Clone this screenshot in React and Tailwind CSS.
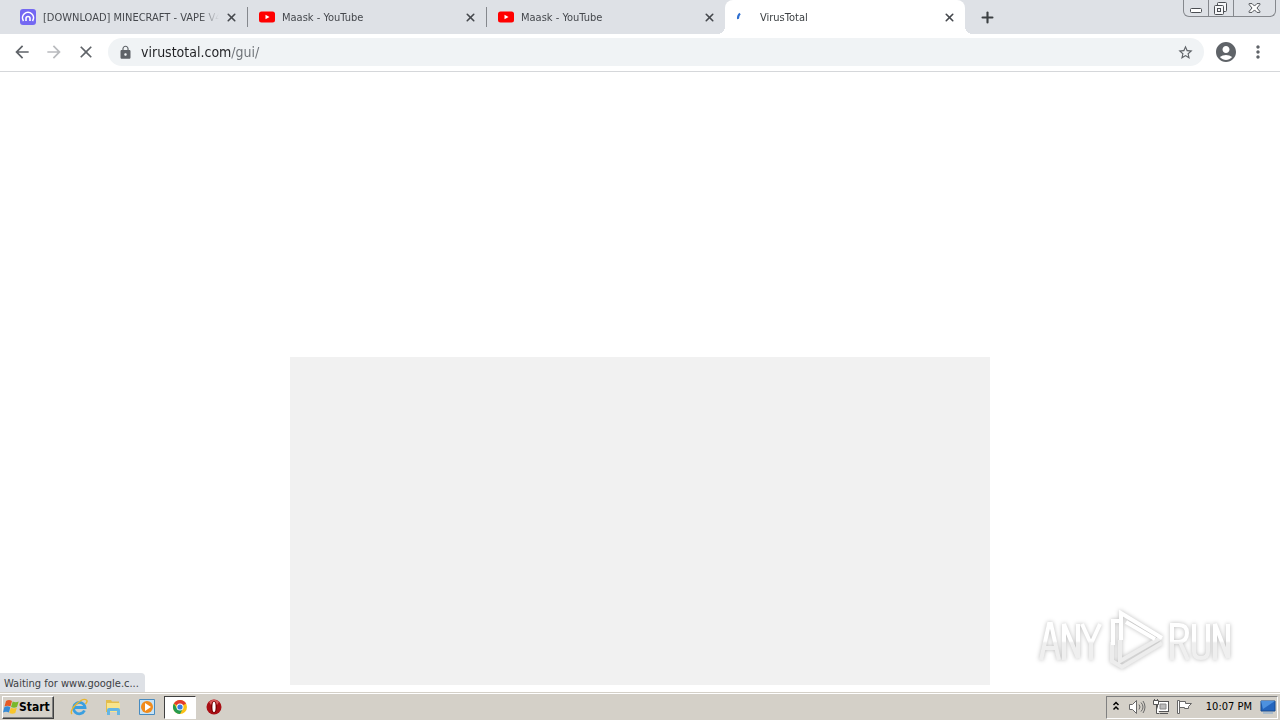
import { X, Plus } from "lucide-react";
import { MdArrowBack, MdArrowForward, MdClose, MdLock, MdStarBorder, MdAccountCircle, MdMoreVert } from "react-icons/md";

function YouTubeIcon() {
  return (
    <svg viewBox="0 0 16 16" className="size-4 shrink-0">
      <rect y="2.500" width="16" height="11" rx="2.500" fill="#f00" />
      <path d="M6.500 5.700v4.600L10.500 8z" fill="#fff" />
    </svg>
  );
}

function ForumIcon() {
  return (
    <svg viewBox="0 0 16 16" className="size-4 shrink-0">
      <rect width="16" height="16" rx="3" fill="#7468f2" />
      <path d="M3.500 12A5.500 5.500 0 1 1 12.500 12M6 12V9.500a2 2 0 0 1 4 0V12" fill="none" stroke="#fff" strokeWidth="1.6" />
    </svg>
  );
}

function Spinner() {
  return (
    <svg viewBox="0 0 16 16" className="mr-1 size-4 shrink-0">
      <path d="M5 10Q4.500 7 7 4.500" fill="none" stroke="#2f6fd0" strokeWidth="2" />
    </svg>
  );
}

const tabs = [
  { title: "[DOWNLOAD] MINECRAFT - VAPE V4", Icon: ForumIcon },
  { title: "Maask - YouTube", Icon: YouTubeIcon },
  { title: "Maask - YouTube", Icon: YouTubeIcon },
  { title: "VirusTotal", Icon: Spinner, active: true },
];

function Tab({ title, Icon, active, divider }) {
  return (
    <div
      className={
        "relative flex h-full min-w-0 items-center pr-2 " +
        (active ? "w-[240px] rounded-t-lg bg-white pl-2 text-[#3c4043]" : "w-[239px] pl-3 text-[#45484d]")
      }
    >
      {active && (
        <>
          <span className="absolute bottom-0 -left-2 size-2 bg-[radial-gradient(circle_at_0_0,#dee1e6_8px,white_8px)]" />
          <span className="absolute -right-2 bottom-0 size-2 bg-[radial-gradient(circle_at_100%_0,#dee1e6_8px,white_8px)]" />
        </>
      )}
      {divider && <span className="absolute -right-px h-5 w-px bg-[#85888d]" />}
      <button className="flex min-w-0 flex-1 items-center gap-[7px] text-left">
        <Icon />
        <span className="flex-1 overflow-hidden pt-px whitespace-nowrap [mask-image:linear-gradient(to_right,black_calc(100%-24px),transparent_calc(100%-4px))]">{title}</span>
      </button>
      <button aria-label="Close tab" className="flex size-4 shrink-0 items-center justify-center">
        <X size={13} strokeWidth={3} color="#45484d" />
      </button>
    </div>
  );
}

function WindowButtons() {
  return (
    <div className="flex h-[17px] self-start rounded-b-md border border-t-0 border-[#85888d]">
      <button aria-label="Minimize" className="w-[25px] border-r border-[#85888d]">
        <svg viewBox="0 0 24 16" className="h-4 w-6" fill="#fff" stroke="#4b4e53">
          <rect x="6.500" y="8.500" width="11" height="4" rx="1" />
        </svg>
      </button>
      <button aria-label="Restore" className="w-[25px] border-r border-[#85888d]">
        <svg viewBox="0 0 24 16" className="h-4 w-6" fill="#f6f7f9" stroke="#4b4e53">
          <rect x="8.500" y="2.500" width="9" height="9" rx="1" />
          <rect x="5.500" y="5.500" width="9" height="9" rx="1" />
          <rect x="8.500" y="8.500" width="3" height="3" />
        </svg>
      </button>
      <button aria-label="Close" className="w-[41px]">
        <svg viewBox="0 0 42 16" className="h-4 w-[41px]" fill="#fff" stroke="#4b4e53">
          <path d="M15.500 3.500h3l2.500 2.500 2.500-2.500h3v1L23.500 8l3 3.500v1h-3L21 10l-2.500 2.500h-3v-1l3-3.500-3-3.500z" />
        </svg>
      </button>
    </div>
  );
}

function Watermark() {
  return (
    <svg viewBox="0 0 200 70" className="absolute right-[43px] bottom-[18px] h-[70px] w-[200px] drop-shadow-[0_0_2px_#bbb]" role="img" aria-label="ANY RUN">
      <defs>
        <linearGradient id="letters" gradientUnits="userSpaceOnUse" x1="0" y1="18" x2="0" y2="56">
          <stop offset="0.5" stopColor="#fff" />
          <stop offset="0.55" stopColor="#efefef" />
        </linearGradient>
      </defs>
      <g fill="none" stroke="url(#letters)" strokeWidth="4">
        <path d="M4 56 12 20h2l8 36M7 44h12M27 56V20l14 34V20M45 20l9 20 9-20M54 39v17" />
        <path d="M135 56V21h7q8 0 8 8t-8 9h-7M143 38l8 18M157 20v27q0 7 7 7t7-7V20M178 56V20l13 34V20" />
      </g>
      <g fill="none" strokeWidth="4">
        <path d="M75 38v19l10 6 40-24M83 36v21l42-24" stroke="#ededed" />
        <path d="M83 17h-7v24M84 36V9l41 25M89 18l29 17" stroke="#fff" />
      </g>
    </svg>
  );
}

function WindowsFlag() {
  return (
    <svg viewBox="0 0 16 16" className="size-4">
      <path d="M3 2q3-2 6 0L7.500 7.500q-3-1.500-6 0z" fill="#e65a25" />
      <path d="M9.700 2.500q3 1.500 6 0L14 8q-3 1.500-6 0z" fill="#79b82b" />
      <path d="M1.300 8.200q3-1.700 6 0L6 13.500q-3-1.500-6 0z" fill="#378bd5" />
      <path d="M7.800 8.700q3 1.500 6 0L12.300 14q-3 1.500-6 0z" fill="#f8c52b" />
    </svg>
  );
}

function ExplorerIcon() {
  return (
    <svg viewBox="0 0 18 18" className="size-[18px]" fill="none">
      <path d="M14.500 12.500A5.700 5.700 0 1 1 15 9.500H5" stroke="#3a9fe0" strokeWidth="2.800" />
      <path d="M2 16C-2 12 12-1 16.500 2q1.500 1-1 4" stroke="#e8b62f" strokeWidth="1.400" />
    </svg>
  );
}

function FolderIcon() {
  return (
    <svg viewBox="0 0 18 18" className="size-[18px]">
      <path d="M2 4V2h5l1 1.500h7V14H2z" fill="#e3bd4c" />
      <path d="M3 5h13v9H3z" fill="#f8e48c" />
      <path d="M3 17v-5q0-2 2-2h9q2 0 2 2v5h-3v-4H6v4z" fill="#65b6e4" />
    </svg>
  );
}

function PlayerIcon() {
  return (
    <svg viewBox="0 0 18 18" className="size-[18px]">
      <path d="M1.500 1.500h15v15h-15z" fill="#c7e3f6" stroke="#478bc0" />
      <circle cx="9" cy="9" r="6" fill="#f18b1b" />
      <path d="M7 5v8l6-4z" fill="#fff" />
    </svg>
  );
}

function ChromeIcon() {
  return (
    <svg viewBox="0 0 16 16" className="size-4">
      <circle cx="8" cy="8" r="7" fill="#fbc116" />
      <path d="M8 8 1.900 4.500A7 7 0 0 1 14.100 4.500z" fill="#e33b2e" />
      <path d="M1.900 4.500A7 7 0 0 0 8 15l3-5.500H5z" fill="#269b50" />
      <circle cx="8" cy="8" r="3.500" fill="#fff" />
      <circle cx="8" cy="8" r="2.600" fill="#377de2" />
    </svg>
  );
}

function OperaIcon() {
  return (
    <svg viewBox="0 0 16 16" className="size-4">
      <circle cx="8" cy="8" r="7.500" fill="#a90e14" />
      <path d="M3 3Q8-2 13 3L11 6H5z" fill="#d95a5a" />
      <ellipse cx="8" cy="8" rx="3" ry="6" fill="#700" />
      <ellipse cx="8" cy="8" rx="1.600" ry="5.200" fill="#fff" />
    </svg>
  );
}

function TrayIcons() {
  return (
    <>
      <svg viewBox="0 0 8 12" className="mb-[2px] h-3 w-2" fill="none" stroke="#000" strokeWidth="1.500">
        <path d="m1.500 5 2.500-2.500L6.500 5M1.500 9.500 4 7l2.500 2.500" />
      </svg>
      <svg viewBox="0 0 18 18" className="ml-2 size-[18px]" fill="#fff" stroke="#686868">
        <path d="M1.500 6.500h3l4-4v13l-4-4h-3z" />
        <path d="M11 6.500q2 2.500 0 5M13 4.500q4 4.500 0 9M15 3q4 6 0 12" fill="none" />
      </svg>
      <svg viewBox="0 0 18 18" className="ml-[6px] size-[18px]" fill="#fff" stroke="#555">
        <rect x="5.500" y="3.500" width="11" height="10" />
        <path d="M8 6h6v5H8z" fill="#bbb" stroke="#888" />
        <path d="M8 15.500h8M4.500 7v8.500h3" />
        <path d="M1.500 2.500h5v4h-5zM2.500 1v2M5.500 1v2" />
      </svg>
      <svg viewBox="0 0 18 18" className="ml-[6px] size-[18px]" fill="#fff" stroke="#666">
        <path d="M1.500 15.500v-13h2v13zM3.500 3.500h6v2h6l-3 3v2h-4v-1h-5z" />
      </svg>
    </>
  );
}

export default function App() {
  return (
    <div className="flex min-h-screen flex-col bg-white font-['DejaVu_Sans_Condensed','DejaVu_Sans',sans-serif] text-[11px] leading-4">
      <header>
        <div className="flex h-[34px] items-center bg-[#dee1e6] pr-1 pl-2">
          {tabs.map((tab, i) => (
            <Tab key={i} {...tab} divider={i < 2} />
          ))}
          <button aria-label="New tab" className="ml-2 flex size-7 items-center justify-center">
            <Plus size={17} strokeWidth={3} color="#3c4043" />
          </button>
          <div className="flex-1" />
          <WindowButtons />
        </div>
        <div className="flex h-[38px] items-center border-b border-[#d5d7da] px-3 pb-px text-[#5f6368]">
          <div className="flex gap-3">
            <button aria-label="Back"><MdArrowBack size={20} /></button>
            <button aria-label="Forward" className="text-[#b9bbbe]"><MdArrowForward size={20} /></button>
            <button aria-label="Stop loading"><MdClose size={20} /></button>
          </div>
          <div className="ml-3 flex h-7 min-w-0 flex-1 items-center gap-2 rounded-full bg-[#f0f3f5] px-[10px]">
            <MdLock size={15} />
            <input
              aria-label="Address"
              defaultValue="virustotal.com/gui/"
              className="min-w-0 flex-1 bg-linear-to-r from-[#202124] from-[90px] to-[#6b6f74] to-[90px] bg-clip-text text-sm text-transparent caret-black outline-none"
            />
            <button aria-label="Bookmark this page"><MdStarBorder size={17} /></button>
          </div>
          <button aria-label="Profile" className="ml-[10px]"><MdAccountCircle size={24} /></button>
          <button aria-label="Menu" className="ml-[10px]"><MdMoreVert size={20} /></button>
        </div>
      </header>
      <main className="relative flex flex-1 flex-col px-4 pt-[285px] pb-[7px]">
        <div className="mx-auto min-h-[328px] w-full max-w-[700px] flex-1 bg-[#f1f1f1]" />
        <div className="absolute bottom-0 left-0 rounded-tr bg-[#dee1e6] pt-[3px] pr-[6px] pl-1 text-[#3c4043]">Waiting for www.google.c...</div>
        <Watermark />
      </main>
      <footer className="flex h-7 items-center border-t border-[#d4d0c8] bg-[#d4d0c8] px-[2px] pt-px text-black shadow-[inset_0_1px_white]">
        <button className="flex h-[23px] items-center border border-t-white border-r-[#404040] border-b-[#404040] border-l-white pr-[3px] text-[12px] font-bold shadow-[inset_-1px_-1px_#808080]">
          <WindowsFlag />
          Start
        </button>
        <nav className="ml-2 flex items-center">
          <button aria-label="Internet Explorer" className="flex w-[34px] justify-center"><ExplorerIcon /></button>
          <button aria-label="File Explorer" className="flex w-[34px] justify-center"><FolderIcon /></button>
          <button aria-label="Media Player" className="flex w-[34px] justify-center"><PlayerIcon /></button>
          <button aria-label="Chrome" className="flex h-[23px] w-8 items-center justify-center border border-t-[#404040] border-r-white border-b-white border-l-[#404040] bg-white"><ChromeIcon /></button>
          <button aria-label="Opera" className="flex w-9 justify-center"><OperaIcon /></button>
        </nav>
        <div className="ml-auto flex h-[23px] items-center border border-t-[#808080] border-r-white border-b-white border-l-[#808080] pr-[1px] pl-[5px]">
          <TrayIcons />
          <time className="ml-3">10:07 PM</time>
          <button aria-label="Show desktop" className="ml-2">
            <svg viewBox="0 0 16 16" className="size-4">
              <path d="M1 2h14v10H1z" fill="#2465be" stroke="#164b8e" />
              <path d="M1 2h14L3 10z" fill="#4d91df" />
              <path d="M3 14h10" stroke="#7fa7d0" />
            </svg>
          </button>
        </div>
      </footer>
    </div>
  );
}
